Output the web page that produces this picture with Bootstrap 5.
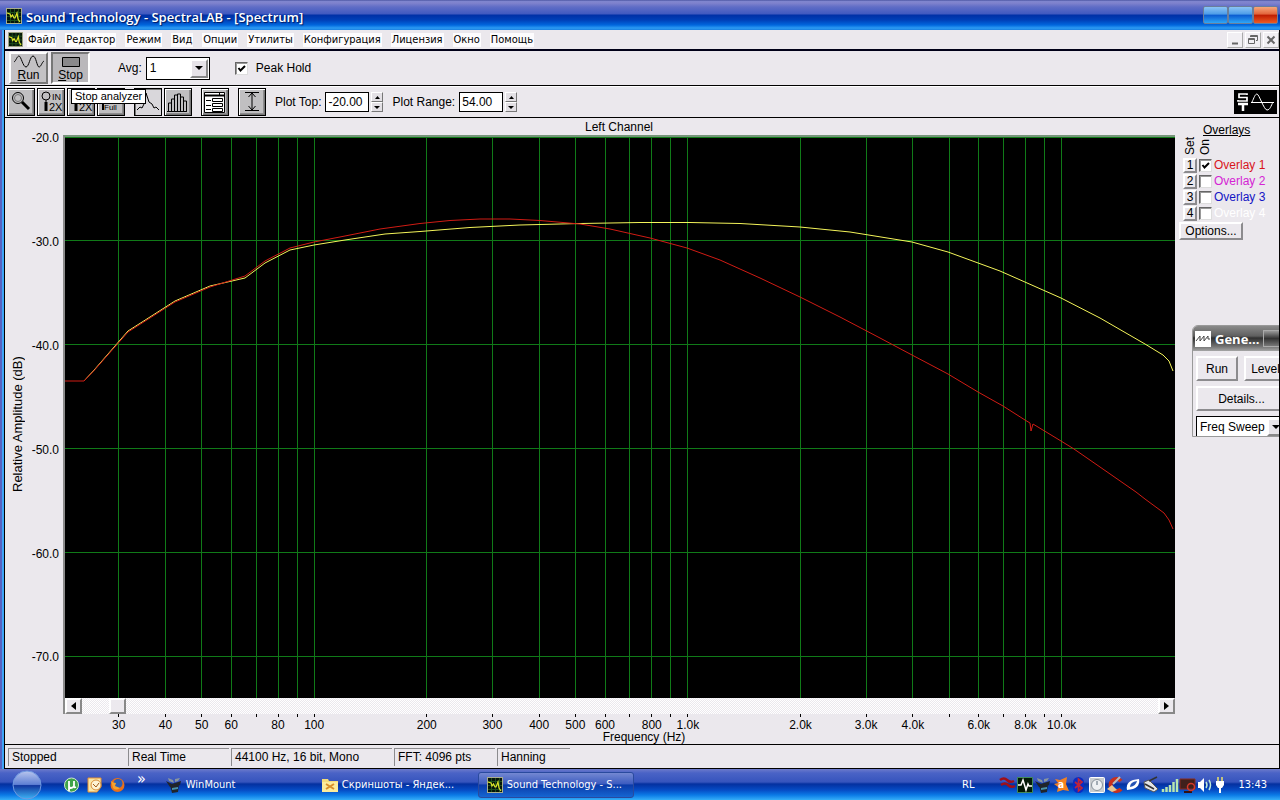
<!DOCTYPE html>
<html lang="ru">
<head>
<meta charset="utf-8">
<meta name="viewport" content="width=device-width, initial-scale=1">
<title>Sound Technology - SpectraLAB - [Spectrum]</title>
<link href="https://cdn.jsdelivr.net/npm/bootstrap@5.3.0/dist/css/bootstrap.min.css" rel="stylesheet">
<style>
:root{--face:#ebe8ed;--ui:"Liberation Sans",Arial,sans-serif;--tah:"DejaVu Sans Condensed","DejaVu Sans",Tahoma,sans-serif}
body{font:12px/14px var(--ui);color:#000;background:var(--face);overflow:hidden}
button,input,select{font:inherit;color:inherit;border-radius:0}
svg{display:block;flex:none}
.title-strip{height:30px;padding:4px 2px 0 6px;background:linear-gradient(#3c4795 0,#7f86cf 1px,#8083cd 3px,#5f6dc6 7px,#4059c0 14px,#0030a6 15px,#0040b8 20px,#0066dd 25px,#2c9bf3 28px,#1b80e2 30px)}
.title-strip h1{font:600 13px/26px "Open Sans","Noto Sans",sans-serif;color:#fff;text-shadow:1px 1px 1px #001a60}
.caps{margin-top:2px}
.cap{width:25px;height:18px;border:1px solid #6b7e9a;padding:0;border-radius:2px;background:linear-gradient(#8cc4f5,#4c9ce8 45%,#0a5ad0 50%,#2fa6f6)}
.cap-x{background:linear-gradient(#f7a67a,#e2643a 45%,#bd1c00 50%,#ee5a22)}
.frame{background:linear-gradient(to right,#5763c2 0 2px,#3fa5f7 2px 4px,#000 4px 5px,var(--face) 5px);padding-left:5px;border-right:1px solid #000;min-height:0}
.menu-line{height:20px;border-bottom:1px solid #000018;padding:0 0 0 3px;font:11px/14px var(--tah)}
.menu-line a{color:#000;text-decoration:none;background:#fdfcfe;margin-right:9px;padding:0 1px}
.mdi{width:16px;height:16px;padding:0;border:1px solid;border-color:#fff #aaa #aaa #fff;background:#f1eff3;margin-left:2px}
.bar-a{height:36px;border-top:1px solid #000018;border-bottom:1px solid #000;padding:0 0 0 4px}
.bar-b{height:32px;border-top:1px solid #fff;border-bottom:1px solid #000;padding:0 2px}
.big-btn{width:39px;height:32px;padding:0;border:2px solid;border-color:#fff #777 #777 #fff;background:#c3c1c4;line-height:14px;margin-right:3px}
.big-btn.down{border-color:#777 #fff #fff #777;background:#bab8bb}
.big-btn svg{margin:0 auto}
.tick{appearance:none;flex:none;width:13px;height:13px;margin:0;background:#fff;border:1px solid;border-color:#666 #ddd #ddd #666;box-shadow:inset 1px 1px #999}
.tick:checked{background:#fff url("data:image/svg+xml,%3Csvg xmlns='http://www.w3.org/2000/svg' viewBox='0 0 11 11'%3E%3Cpath d='M2.500 5L4.500 7.500L9 3' fill='none' stroke='black' stroke-width='2'/%3E%3C/svg%3E")}
.after-gap{margin-left:25px}
.avg{width:64px;height:23px}
.tool{width:28px;height:28px;padding:0;border:1px solid #000;background:#c0bfc1;box-shadow:inset 1px 1px #fff,inset -1px -1px #777,inset -2px -2px #8d8c8e;margin-right:2px}
.tool.down{background:#d9d7db;box-shadow:inset 1px 1px #777}
.tool.gap-r{margin-right:9px}
.tip{left:66px;top:2px;height:15px;background:#fff;border:1px solid #000;padding:0 3px;font-size:11px;line-height:13px;z-index:2}
.drop{border:1px solid #000;background:#fff}
.drop select{appearance:none;border:0;background:none;padding:0 0 0 3px;outline:0;min-width:0;flex:1}
.arrow{width:18px;border:2px solid;border-color:#fff #888 #888 #fff;background:#e6e3e8;display:flex;align-items:center;justify-content:center;margin:1px}
.num{width:44px;height:20px;border:1px solid #000;padding:0 2px;background:#fff;margin:0 2px 0 4px}
.spin{width:12px;height:20px;margin-right:9px}
.spin button{height:10px;padding:0;border:1px solid;border-color:#fff #777 #777 #fff;background:#e3e0e5;display:flex;align-items:center;justify-content:center}
.work{display:grid;grid-template-columns:58px minmax(0,1fr) 104px;grid-template-rows:17px minmax(0,1fr) 16px 30px;flex:1;min-height:0;overflow:hidden;position:relative}
.plot-name{grid-area:1/2/2/3;line-height:18px}
.y-name{grid-area:2/1/4/2;writing-mode:vertical-rl;transform:rotate(180deg);text-align:center;font-size:13px;width:14px;margin-left:6px}
.y-scale{grid-area:2/1/3/2;padding-top:2px}
.y-scale svg,.plot svg,.x-scale svg{width:100%;height:100%;overflow:visible}
.plot{grid-area:2/2/3/3;background:#000;border-left:2px solid #8b8b8b;border-top:2px solid #76957a;min-height:0;overflow:hidden}
.scroller{grid-area:3/2/4/3;border-left:2px solid #8b8b8b;background:repeating-conic-gradient(#fff 0 25%,#ebe8ed 0 50%) 0 0/2px 2px}
.scroller button,.scroller i{width:17px;border:2px solid;border-color:#fff #888 #888 #fff;padding:0;background:#ece9ee;display:flex;align-items:center;justify-content:center}
.scroller i{margin-left:27px}
.x-scale{grid-area:4/2/5/3;padding-left:2px;display:grid;grid-template-rows:16px 14px}
.side{grid-area:1/3/5/4;padding:5px 0 0 4px}
.col-names{height:20px;padding-bottom:2px}
.col-names span{writing-mode:vertical-rl;transform:rotate(180deg);width:15px;line-height:15px}
.ov{height:16px;gap:2px}
.soft{border:2px solid;border-color:#fff #8c8b8e #8c8b8e #fff;background:var(--face);padding:0;line-height:14px}
.ov .soft{width:14px;height:15px;line-height:11px}
.opt{width:64px;height:18px;margin-top:1px}
.gen{right:-12px;top:207px;width:99px;height:112px;border:1px solid #999;border-radius:6px 0 0 0;background:var(--face);overflow:hidden}
.gen-head{height:25px;background:linear-gradient(#8a8a8a,#5f5f5f 10px,#303030 12px,#6e6e6e 20px,#a5a5a5);font:bold 13px/24px "Open Sans","Noto Sans",sans-serif;color:#fff;padding-left:2px}
.gen-head button{height:17px;border:1px solid #aaa;background:linear-gradient(#999,#333 50%,#777);flex:1}
.gen-row{padding:5px 3px 0;gap:6px}
.gen-row .soft{height:25px;flex:1}
.gen-row .run{flex:0 0 42px}
.gen .drop{margin:5px 3px 0;height:22px}
.status{height:25px;border-top:1px solid #000;border-bottom:1px solid #000;padding:3px 3px 2px}
.status div{border:1px solid #8c8b8e;border-right:0;border-bottom:0;padding:1px 3px;margin-right:2px;line-height:15px;width:101px}
.status .w1{width:118px}.status .w3{width:161px}.status .w5{width:73px}
.task{height:31px;background:linear-gradient(#6d7acb,#4a63c6 4px,#3654bd 13px,#0430a0 15px,#064cc5 21px,#0b7ae6 26px,#35aef8 31px);color:#fff;font:11px/14px var(--tah);padding:1px 0 0 12px}
.task a{color:#fff;text-decoration:none;display:flex;align-items:center;gap:4px;height:26px;width:156px}
.task .active-app{border:1px solid #2a4a9e;border-radius:3px;padding-left:8px;background:linear-gradient(#7488d2,#3d5cc0 45%,#0b3aa8 50%,#1566d2)}
.quick{margin-left:22px}
.more{margin:0 20px 12px 12px;font-size:16px}
.lang{margin-right:25px}
.clock{margin:0 13px}
</style>
</head>
<body class="d-flex flex-column vh-100 m-0">
<svg width="0" height="0" class="position-absolute" aria-hidden="true">
<symbol id="lab" viewBox="0 0 16 16"><path fill="#a9ad8d" d="M0 0h16v16H0z"/><path fill="#06140a" d="M1 1h14v14H1z"/><path d="M1 4.500h14M1 8.500h14M1 12.500h14M4.500 1v14M8.500 1v14M12.500 1v14" stroke="#1d4f1c"/><path d="M1 5l3 1 1 3 1.500-2 1.500 3 1 0 2-5 1 6 2 3" fill="none" stroke="#dfe62a" stroke-width="1.200"/></symbol>
<symbol id="up" viewBox="0 0 5 3"><path d="M2.500 0L5 3H0z"/></symbol>
<symbol id="dn" viewBox="0 0 8 4"><path d="M0 0h8L4 4z"/></symbol>
<symbol id="hat" viewBox="0 0 16 16"><path fill="#20242a" d="M4 8l9-1-1 8-6 1zM0 4l6 3 9-3-1 4-4 2H4z"/><path fill="#8a969e" d="M2 1l5 2 1 3-5-2zM9 2l5-1-2 3-3 1z"/><path fill="#4a90a8" d="M6 11l6-1v2l-6 1z"/></symbol>
</svg>

<header class="title-strip d-flex align-items-start">
<svg width="16" height="16" class="mt-1"><use href="#lab"/></svg>
<h1 class="m-0 ms-1 flex-grow-1">Sound Technology - SpectraLAB - [Spectrum]</h1>
<div class="caps d-flex"><button class="cap" aria-label="Minimize"></button><button class="cap" aria-label="Maximize"></button><button class="cap cap-x" aria-label="Close"></button></div>
</header>

<div class="frame d-flex flex-column flex-grow-1">
<nav class="menu-line d-flex align-items-center">
<svg width="15" height="15" class="me-1"><use href="#lab"/></svg>
<a href="#">Файл</a><a href="#">Редактор</a><a href="#">Режим</a><a href="#">Вид</a><a href="#">Опции</a><a href="#">Утилиты</a><a href="#">Конфигурация</a><a href="#">Лицензия</a><a href="#">Окно</a><a href="#">Помощь</a>
<div class="d-flex ms-auto">
<button class="mdi" aria-label="Minimize"><svg width="14" height="14"><path d="M4 10.500h6" stroke="#666" stroke-width="2"/></svg></button>
<button class="mdi" aria-label="Restore"><svg width="14" height="14" fill="none" stroke="#666"><path d="M4.500 4V2.500h7v5H10M2.500 5.500h6v5h-6zM3 6.500h6M5 3.500h6"/></svg></button>
<button class="mdi" aria-label="Close"><svg width="14" height="14"><path d="M3.500 3.500l7 7m0-7l-7 7" stroke="#666" stroke-width="2"/></svg></button>
</div>
</nav>

<div class="bar-a d-flex align-items-center">
<button class="big-btn"><svg width="32" height="14" fill="none" stroke="#000"><path d="M1 8C3 7 4 2 6 2s4 11 7 11 4-11 7-11 4 11 6 11 3-5 5-6"/></svg><u>R</u>un</button>
<button class="big-btn down"><svg width="32" height="14"><path d="M7.500 3.500h17v9h-17z" fill="#8a898b" stroke="#000"/></svg><u>S</u>top</button>
<label for="avg" class="after-gap">Avg:</label>
<div class="drop avg d-flex ms-1"><select id="avg"><option>1</option></select><span class="arrow"><svg width="8" height="4"><use href="#dn"/></svg></span></div>
<input type="checkbox" class="tick after-gap" id="pk" checked><label for="pk" class="ms-2">Peak Hold</label>
</div>

<div class="bar-b d-flex align-items-center position-relative">
<button class="tool" aria-label="Zoom"><svg width="26" height="26" fill="none" stroke="#000"><circle cx="10" cy="9" r="5.500"/><circle cx="10" cy="9" r="3.500" stroke="#777"/><path d="M14 13l7 7" stroke-width="3"/></svg></button>
<button class="tool" aria-label="Zoom in 2X"><svg width="26" height="26" fill="none" stroke="#000"><circle cx="8" cy="7" r="4"/><path d="M8 11v2"/><path d="M8 13v9" stroke-width="3"/><text x="14" y="11" font-size="9" fill="#000" stroke="none">IN</text><text x="11" y="22" font-size="11" fill="#000" stroke="none">2X</text></svg></button>
<button class="tool" aria-label="Zoom out 2X"><svg width="26" height="26" fill="none" stroke="#000"><circle cx="8" cy="7" r="4"/><path d="M8 13v9" stroke-width="3"/><text x="11" y="22" font-size="11" fill="#000" stroke="none">2X</text></svg></button>
<button class="tool gap-r" aria-label="Zoom full"><svg width="26" height="26" fill="none" stroke="#000"><circle cx="8" cy="7" r="4"/><path d="M5 12v9" stroke-width="2"/><text x="6" y="21" font-size="8" fill="#000" stroke="none">Full</text></svg></button>
<button class="tool down" aria-label="Line plot"><svg width="26" height="26" fill="none" stroke="#000"><path d="M2 21l3-3 2 1 3-6 1-9 3 9 3 2 2 4 2-1 3 3"/></svg></button>
<button class="tool gap-r" aria-label="Bar plot"><svg width="26" height="26" fill="none" stroke="#000"><path d="M3.500 22v-8h3v-4h3v-4h3v-1h3v3h3v4h3v10M6.500 22V12M9.500 22V9M12.500 22V6M15.500 22V7M18.500 22V11M2 22.500h20"/></svg></button>
<button class="tool gap-r" aria-label="Settings"><svg width="26" height="26" fill="#fff" stroke="#000"><path d="M2.500 3.500h20v20h-20z"/><path d="M3 6.500h19" stroke-width="2"/><path d="M10.500 9.500h10v3h-10zM10.500 14.500h10v3h-10zM10.500 19.500h10v3h-10zM4 11.500h5M4 16.500h5M4 20.500h5M17.500 4v3"/></svg></button>
<button class="tool gap-r" aria-label="Scale"><svg width="26" height="26" fill="none" stroke="#000"><path d="M6 3.500h14M6 21.500h14M13 4v17M9.500 8L13 4l3.500 4M9.500 17l3.500 4 3.500-4"/></svg></button>
<label for="ptop">Plot Top:</label><input class="num" id="ptop" value="-20.00">
<div class="spin d-flex flex-column"><button aria-label="Up"><svg width="5" height="3"><use href="#up"/></svg></button><button aria-label="Down"><svg width="6" height="3"><use href="#dn"/></svg></button></div>
<label for="prng">Plot Range:</label><input class="num" id="prng" value="54.00">
<div class="spin d-flex flex-column"><button aria-label="Up"><svg width="5" height="3"><use href="#up"/></svg></button><button aria-label="Down"><svg width="6" height="3"><use href="#dn"/></svg></button></div>
<svg class="ms-auto" width="43" height="24" fill="none" stroke="#fff"><path d="M0 0h43v24H0z" fill="#000" stroke="none"/><path d="M13 5V4H5v3.500h8V11H4v-1" stroke-width="1.700"/><path d="M4 14h10M9 14v7" stroke-width="2.500"/><path d="M17 12.500h23M18 12c2-4 3-8 5-8s7 16 10 16 4-4 6-8"/></svg>
<div class="tip position-absolute">Stop analyzer</div>
</div>

<main class="work">
<div class="plot-name text-center">Left Channel</div>
<div class="y-name">Relative Amplitude (dB)</div>
<div class="y-scale"><svg id="ys"></svg></div>
<div class="plot"><svg id="grid"><svg viewBox="65 137 1110 561" preserveAspectRatio="none" fill="none" id="curves">
<path stroke="#f4f45a" vector-effect="non-scaling-stroke" d="M84 381L95 369L128 331L150 317L175 301L210 286L245 278L265 263L290 250L314 245L345 240L385 234L420 231.500L470 227.500L520 225L580 223.500L640 222.500L690 222.500L740 223.500L800 227L850 232L912 242L948 252L1000 271L1061 298L1100 318L1145 344L1163 355L1169 361L1173 371"/>
<path stroke="#d01c14" vector-effect="non-scaling-stroke" d="M65 381L84 381L95 369.500L128 332L150 318L175 302L210 287L245 276L265 261L290 248L314 242L345 236L380 229L420 223.500L450 220.500L480 219L510 219L540 220.500L580 224L610 229L650 238L687 248L720 260L760 278L800 297L840 317L880 338L912 355L948 374L978 392L1003 406L1025 420L1030 423L1031 431L1033 424L1061 441L1074 449L1100 467L1136 492L1145 499L1164 513L1169 520L1173 529"/>
</svg></svg></div>
<div class="scroller d-flex"><button aria-label="Left"><svg width="5" height="8"><path d="M5 0v8L0 4z"/></svg></button><i></i><button class="ms-auto" aria-label="Right"><svg width="5" height="8"><path d="M0 0v8l5-4z"/></svg></button></div>
<div class="x-scale"><svg id="xs"></svg><div class="text-center ps-5">Frequency (Hz)</div></div>

<aside class="side">
<div class="ms-4 text-decoration-underline">Overlays</div>
<div class="col-names d-flex ms-1"><span>Set</span><span>On</span></div>
<div id="ovs"></div>
<button class="soft opt">Options...</button>
</aside>

<section class="gen position-absolute">
<div class="gen-head d-flex align-items-center"><svg width="16" height="16" fill="none" stroke="#444"><path fill="#fff" stroke="none" d="M0 0h16v16H0z"/><path d="M1 10l4-5v5l4-5v5l4-5v3h2"/></svg><span class="mx-1">Gene...</span><button aria-label="Minimize"></button></div>
<div class="gen-row d-flex"><button class="soft run">Run</button><button class="soft">Level</button></div>
<div class="gen-row d-flex"><button class="soft">Details...</button></div>
<div class="drop d-flex"><select aria-label="Signal"><option>Freq Sweep</option></select><span class="arrow"><svg width="8" height="4"><use href="#dn"/></svg></span></div>
</section>
</main>

<footer class="status d-flex"><div class="w1">Stopped</div><div>Real Time</div><div class="w3">44100 Hz, 16 bit, Mono</div><div>FFT: 4096 pts</div><div class="w5">Hanning</div></footer>
</div>

<div class="task d-flex align-items-center">
<svg width="30" height="30" viewBox="0 0 30 30"><defs><linearGradient id="o" x2="0" y2="1"><stop offset="0" stop-color="#b9c6ee"/><stop offset=".48" stop-color="#5f80d4"/><stop offset=".52" stop-color="#12379e"/><stop offset="1" stop-color="#3db5f6"/></linearGradient></defs><circle cx="15" cy="15" r="14" fill="url(#o)" stroke="#6f98e0"/></svg>
<div class="quick d-flex gap-2">
<svg width="15" height="16"><circle cx="7.500" cy="8" r="7" fill="#3fa348" stroke="#cfe8d0"/><path d="M5 4v5q0 2 2 2t3-2V4v5q0 2 2 1M5 8v6" fill="none" stroke="#fff" stroke-width="1.800"/></svg>
<svg width="15" height="16"><path d="M1 1h13v9l-4 5H1z" fill="#f9e7a8" stroke="#e38f2e"/><circle cx="9" cy="8" r="5" fill="#fdf4d4" stroke="#d98e3a"/><path d="M6 7l3 3 3-4" fill="none" stroke="#a05a18"/></svg>
<svg width="15" height="16"><circle cx="7.500" cy="8" r="7" fill="#e8701a"/><circle cx="8" cy="6.500" r="4.500" fill="#2c5eb4"/><path d="M1 4q2 2 5 2l-1 3 5 2q-4 3-7 0z" fill="#f6a32a"/></svg>
</div>
<span class="more">»</span>
<a href="#"><svg width="16" height="16"><use href="#hat"/></svg>WinMount</a>
<a href="#"><svg width="16" height="16"><path d="M0 2h6l1 2h9v11H0z" fill="#f4dc7a"/><path d="M0 5h16v10H0z" fill="#fbec9b"/><path d="M4 7l8 5M12 7l-8 5" stroke="#d9902a" stroke-width="2"/></svg>Скриншоты - Яндек...</a>
<a href="#" class="active-app"><svg width="16" height="16"><use href="#lab"/></svg>Sound Technology - S...</a>
<span class="lang ms-auto">RL</span>
<svg width="226" height="18" viewBox="0 0 226 18">
<path d="M1 4q4-3 7 0t7 1M2 9q4-3 7 0t7 1" fill="none" stroke="#a00f18" stroke-width="2.500"/>
<path d="M18.500 1.500h15v15h-15z" fill="#041a08" stroke="#3f8a58"/><path d="M19 9h3l2-5 3 10 2-6 1 2h3" fill="none" stroke="#fff" stroke-width="1.500"/>
<use href="#hat" x="36" y="1" width="16" height="16"/>
<path d="M56 3l5 1 7-3-1 7 3 7-6-1-6 2 1-5-4-3 4-1z" fill="#f58220"/><text x="59" y="12" font-size="10" font-weight="bold" fill="#fff">a</text>
<rect x="74" y="1" width="11" height="16" rx="5.500" fill="#0a2bc4"/><path d="M76 6l7 6-3.500 3V3L83 6l-7 6" fill="none" stroke="#c02438" stroke-width="1.700"/>
<rect x="90.500" y="1.500" width="15" height="15" rx="1" fill="#c9cdd0" stroke="#fff"/><circle cx="98" cy="9" r="5.500" fill="#eef1f3" stroke="#87919a"/><path d="M98 5v4" stroke="#567"/>
<path d="M122 5a6 6 0 1 0 0 8" fill="none" stroke="#c9301c" stroke-width="4"/><path d="M108 13l5-4 5 5-5 2z" fill="#e8c590"/><path d="M114 8l7-7" stroke="#bbb" stroke-width="2"/>
<path d="M128 14q-2-10 12-11 2 10-12 11z" fill="#fff"/><path d="M131 11q0-5 7-6-1 5-7 6z" fill="#2353b4"/>
<path d="M145 6l5-2 9 9-4 3-9-4z" fill="#e3e5e6" stroke="#555"/><path d="M146 8l9 5M150 5l8-4" stroke="#333" stroke-width="1.500"/>
<path d="M164 16v-3M167.500 16v-5M171 16V9M174.500 16V6M178 16V3" stroke="#b8e6b0" stroke-width="2.500"/>
<path d="M181 3h15v10h-15z" fill="#40201c" stroke="#8a2b20"/><path d="M185 16h8" stroke="#311" stroke-width="2"/><circle cx="192" cy="11" r="3.500" fill="none" stroke="#d43a2a" stroke-width="1.500"/>
<path d="M199 6h2l4-4v14l-4-4h-2z" fill="#fff"/><path d="M207 6q2 3 0 6M210 4q3 5 0 10" fill="none" stroke="#bfe9d6" stroke-width="1.500"/>
<path d="M217 5h8v4l-2 3h-4l-2-3z" fill="#fff"/><path d="M219 1v4M223 1v4" stroke="#eee36a" stroke-width="1.500"/><path d="M221 12v5" stroke="#fff" stroke-width="2"/>
</svg>
<span class="clock">13:43</span>
</div>

<script src="https://cdn.jsdelivr.net/npm/bootstrap@5.3.0/dist/js/bootstrap.bundle.min.js"></script>
<script>
const NS='http://www.w3.org/2000/svg';
function add(parent,tag,attrs,text,before){const e=document.createElementNS(NS,tag);for(const k in attrs)e.setAttribute(k,attrs[k]);if(text)e.textContent=text;parent.insertBefore(e,before||null);return e}
const grid=document.getElementById('grid'),curves=document.getElementById('curves'),xs=document.getElementById('xs'),ys=document.getElementById('ys');
// Frequency axis: one decade takes 33.67 % of the plot width, 100 Hz sits at 22.45 %.
const xPos=f=>(22.45+33.67*Math.log10(f/100)).toFixed(2)+'%';
const yPos=db=>((-20-db)/54*100).toFixed(2)+'%';
const named={30:'30',40:'40',50:'50',60:'60',80:'80',100:'100',200:'200',300:'300',400:'400',500:'500',600:'600',800:'800',1000:'1.0k',2000:'2.0k',3000:'3.0k',4000:'4.0k',6000:'6.0k',8000:'8.0k',10000:'10.0k'};
for(const base of [10,100,1000,10000])for(let n=1;n<10;n++){
 const f=base*n;if(f<30||f>10000)continue;const x=xPos(f);
 add(grid,'line',{x1:x,x2:x,y1:0,y2:'100%',stroke:'#107a18','shape-rendering':'crispEdges'},'',curves);
 add(xs,'line',{x1:x,x2:x,y1:0,y2:3,stroke:'#000','shape-rendering':'crispEdges'});
 if(named[f])add(xs,'text',{x:x,y:15,'text-anchor':'middle'},named[f]);
}
for(let db=-20;db>=-70;db-=10){
 add(grid,'line',{x1:0,x2:'100%',y1:yPos(db),y2:yPos(db),stroke:'#107a18','shape-rendering':'crispEdges'},'',curves);
 const g=add(ys,'svg',{y:yPos(db),overflow:'visible'});
 add(g,'text',{x:54,y:5,'text-anchor':'end'},db.toFixed(1));
}
document.getElementById('ovs').innerHTML=['#d8141c','#d424d4','#1414c4','#ffffff'].map((c,i)=>`<div class="ov d-flex align-items-center ps-1"><button class="soft">${i+1}</button><input type="checkbox" class="tick" id="ov${i+1}"${i?'':' checked'}><label for="ov${i+1}" style="color:${c}">Overlay ${i+1}</label></div>`).join('');
</script>
</body>
</html>
